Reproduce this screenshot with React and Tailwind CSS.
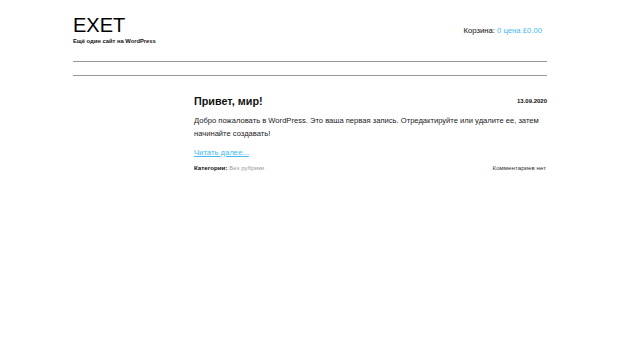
export default function App() {
  return (
    <div className="w-[620px] h-[343px] bg-white text-[#111] overflow-hidden" style={{ fontFamily: '"Liberation Sans", Arial, sans-serif' }}>
      <div className="mx-[73px] pt-[13px]">
        <header className="flex justify-between items-start">
          <div>
            <div className="text-[20px] leading-[24px] text-black">EXET</div>
            <div className="text-[5.8px] font-bold leading-[8px]">Ещё один сайт на WordPress</div>
          </div>
          <div className="text-[7.7px] leading-[10px] mt-[13px] mr-[5px]">
            Корзина: <span className="text-[#44b8f1]">0 цена £0.00</span>
          </div>
        </header>
        <div className="mt-[16px] border-t border-[#999]"></div>
        <div className="mt-[13px] border-t border-[#999]"></div>
        <main className="ml-[121px] mt-[18px]">
          <div className="flex justify-between items-center">
            <h1 className="text-[10.8px] font-bold leading-[14px]">Привет, мир!</h1>
            <span className="text-[6px] font-bold leading-[8px]">13.09.2020</span>
          </div>
          <p className="text-[7.6px] leading-[13px] mt-[6px] text-[#222]">
            Добро пожаловать в WordPress. Это ваша первая запись. Отредактируйте или удалите ее, затем начинайте создавать!
          </p>
          <a className="block text-[7.7px] text-[#44b8f1] underline mt-[8px] leading-[10px]">Читать далее...</a>
          <div className="flex justify-between mt-[6px] text-[6.2px] leading-[8px]">
            <span><span className="font-bold">Категории:</span> <span className="text-[#999]">Без рубрики</span></span>
            <span className="mr-[1px] text-[#333]">Комментариев нет</span>
          </div>
        </main>
      </div>
    </div>
  );
}
